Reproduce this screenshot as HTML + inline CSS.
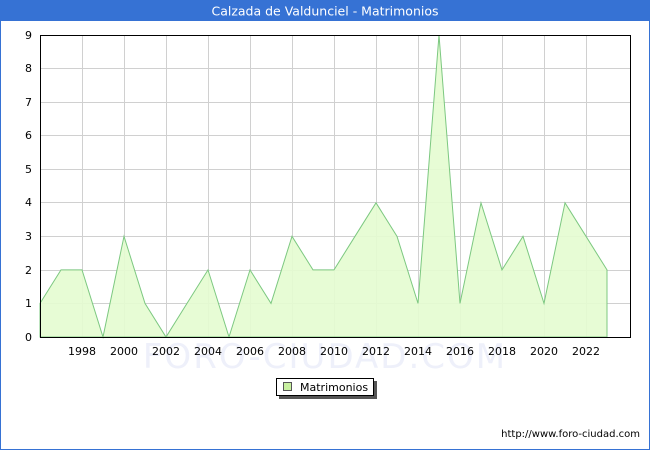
<!DOCTYPE html>
<html><head><meta charset="utf-8"><style>
body{margin:0;width:650px;height:450px;overflow:hidden;background:#fff;font-family:"DejaVu Sans","Liberation Sans",sans-serif}
</style></head><body>
<svg width="650" height="450" xmlns="http://www.w3.org/2000/svg" font-family="DejaVu Sans, Liberation Sans, sans-serif">
<rect x="0.5" y="0.5" width="649" height="449" fill="#fff" stroke="#3672d4"/>
<rect x="0" y="0" width="650" height="21" fill="#3672d4"/>
<text x="325" y="15.5" fill="#fff" font-size="12.5" text-anchor="middle">Calzada de Valdunciel - Matrimonios</text>
<text x="325" y="368" fill="#eef0fa" font-size="34" text-anchor="middle" letter-spacing="2">FORO-CIUDAD.COM</text>
<g stroke="#d0d0d0" stroke-width="1">
<line x1="40" x2="631" y1="303.5" y2="303.5"/><line x1="40" x2="631" y1="270.5" y2="270.5"/>
<line x1="40" x2="631" y1="236.5" y2="236.5"/><line x1="40" x2="631" y1="202.5" y2="202.5"/>
<line x1="40" x2="631" y1="169.5" y2="169.5"/><line x1="40" x2="631" y1="135.5" y2="135.5"/>
<line x1="40" x2="631" y1="102.5" y2="102.5"/><line x1="40" x2="631" y1="68.5" y2="68.5"/>
<line y1="35" y2="337" x1="82.5" x2="82.5"/><line y1="35" y2="337" x1="124.5" x2="124.5"/>
<line y1="35" y2="337" x1="166.5" x2="166.5"/><line y1="35" y2="337" x1="208.5" x2="208.5"/>
<line y1="35" y2="337" x1="250.5" x2="250.5"/><line y1="35" y2="337" x1="292.5" x2="292.5"/>
<line y1="35" y2="337" x1="334.5" x2="334.5"/><line y1="35" y2="337" x1="376.5" x2="376.5"/>
<line y1="35" y2="337" x1="418.5" x2="418.5"/><line y1="35" y2="337" x1="460.5" x2="460.5"/>
<line y1="35" y2="337" x1="502.5" x2="502.5"/><line y1="35" y2="337" x1="544.5" x2="544.5"/>
<line y1="35" y2="337" x1="586.5" x2="586.5"/>
</g>
<polygon fill="#e4fcd0" fill-opacity="0.9" stroke="#7cc880" stroke-width="1" points="40,337 40,303.4 61,269.9 82,269.9 103,337 124,236.3 145,303.4 166,337 187,303.4 208,269.9 229,337 250,269.9 271,303.4 292,236.3 313,269.9 334,269.9 355,236.3 376,202.8 397,236.3 418,303.4 439,35 460,303.4 481,202.8 502,269.9 523,236.3 544,303.4 565,202.8 586,236.3 607,269.9 607,337"/>
<rect x="40.5" y="35.5" width="590" height="302" fill="none" stroke="#000"/>
<g font-size="11" fill="#000" text-anchor="end">
<text x="32" y="341">0</text><text x="32" y="307">1</text><text x="32" y="274">2</text>
<text x="32" y="240">3</text><text x="32" y="206">4</text><text x="32" y="173">5</text>
<text x="32" y="139">6</text><text x="32" y="106">7</text><text x="32" y="72">8</text><text x="32" y="39">9</text>
</g>
<g font-size="11" fill="#000" text-anchor="middle">
<text x="82" y="355">1998</text><text x="124" y="355">2000</text><text x="166" y="355">2002</text>
<text x="208" y="355">2004</text><text x="250" y="355">2006</text><text x="292" y="355">2008</text>
<text x="334" y="355">2010</text><text x="376" y="355">2012</text><text x="418" y="355">2014</text>
<text x="460" y="355">2016</text><text x="502" y="355">2018</text><text x="544" y="355">2020</text>
<text x="586" y="355">2022</text>
</g>
<rect x="279" y="381" width="98" height="18" fill="#555"/>
<rect x="276.5" y="378.5" width="97" height="17" fill="#fff" stroke="#000"/>
<rect x="283.5" y="382.5" width="8" height="8" fill="#c8f0a0" stroke="#555"/>
<text x="300" y="391" font-size="11">Matrimonios</text>
<text x="640" y="437" font-size="10" text-anchor="end">http://www.foro-ciudad.com</text>
</svg>
</body></html>
